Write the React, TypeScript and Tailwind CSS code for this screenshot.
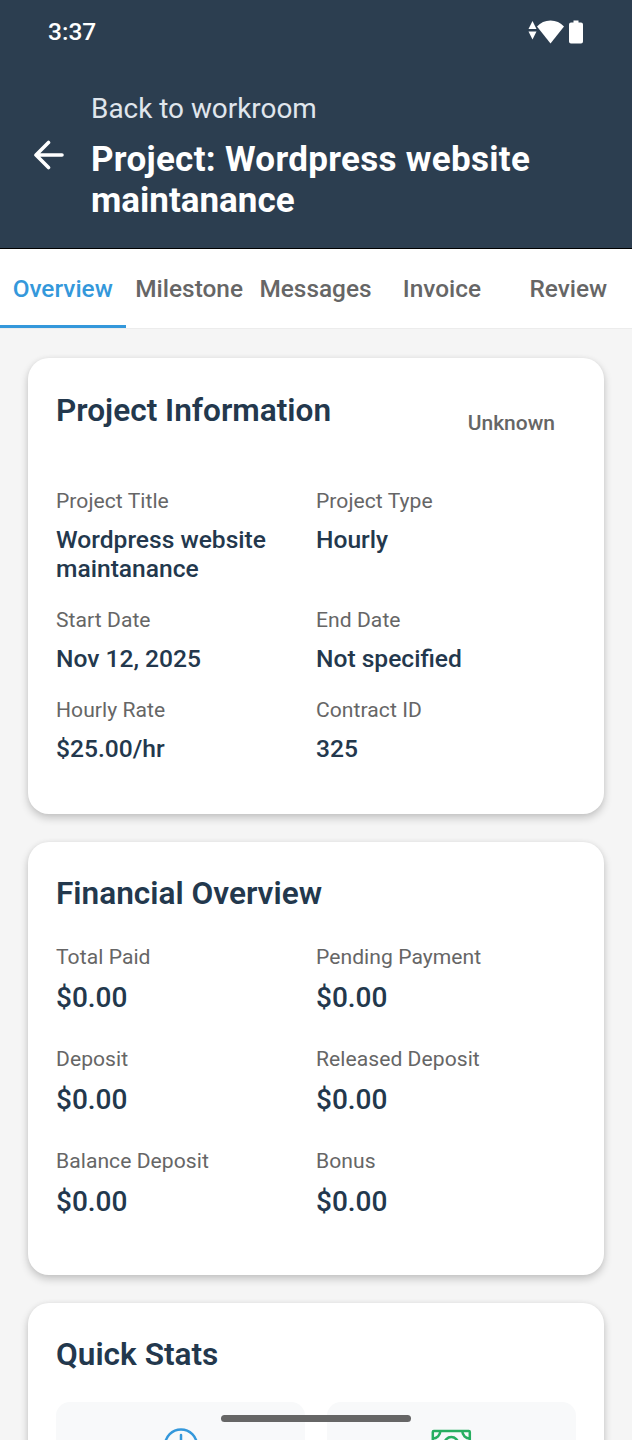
type Item = { label: string; value: string }

const tabs = ['Overview', 'Milestone', 'Messages', 'Invoice', 'Review']

const projectInfo: Item[] = [
  { label: 'Project Title', value: 'Wordpress website maintanance' },
  { label: 'Project Type', value: 'Hourly' },
  { label: 'Start Date', value: 'Nov 12, 2025' },
  { label: 'End Date', value: 'Not specified' },
  { label: 'Hourly Rate', value: '$25.00/hr' },
  { label: 'Contract ID', value: '325' }
]

const financials: Item[] = [
  { label: 'Total Paid', value: '$0.00' },
  { label: 'Pending Payment', value: '$0.00' },
  { label: 'Deposit', value: '$0.00' },
  { label: 'Released Deposit', value: '$0.00' },
  { label: 'Balance Deposit', value: '$0.00' },
  { label: 'Bonus', value: '$0.00' }
]

const cardClass =
  'shrink-0 rounded-[21px] bg-white px-7 pt-7 shadow-[0_4px_8px_rgba(0,0,0,0.2),0_0_5px_rgba(0,0,0,0.05)]'
const titleClass = 'text-[31.6px] leading-[48px] font-semibold text-[#23384d]'

function StatusBar() {
  return (
    <div className="flex h-16 items-center justify-between pl-12 pr-[47px]">
      <span className="text-[24.5px] font-medium leading-7">3:37</span>
      <svg width="57" height="26" viewBox="0 0 57 26" fill="currentColor">
        <path d="M4.5 2 8.500 10H.5zM.5 12.500h8L4.5 20.500z" />
        <path d="M9 7.500C12.500 3.500 17 1.500 22.500 1.500s10 2 13.500 6L22.500 24.500z" />
        <path d="M45.500 1.500h5v2H53q2 0 2 2v17q0 2-2 2h-10q-2 0-2-2v-17q0-2 2-2h2.500z" />
      </svg>
    </div>
  )
}

function Header() {
  return (
    <header className="h-[249px] shrink-0 border-b border-black bg-[#2c3e50] text-white">
      <StatusBar />
      <div className="flex pl-[34px] pt-6">
        <svg
          className="mt-[52px] shrink-0"
          width="30"
          height="30"
          viewBox="0 0 30 30"
          fill="none"
          stroke="currentColor"
          strokeWidth="3.6"
          strokeLinecap="round"
          strokeLinejoin="round"
        >
          <path d="M14.500 2.500 2 15l12.500 12.500M2.500 15H28" />
        </svg>
        <div className="ml-[27px]">
          <p className="pt-px text-[27.9px] leading-10 text-[#e0e6ed]">Back to workroom</p>
          <h1 className="mt-[10px] w-[480px] text-[35px] font-bold leading-[41px]">
            <span className="tracking-[0.3px]">Project: Wordpress website</span> maintanance
          </h1>
        </div>
      </div>
    </header>
  )
}

function TabBar() {
  return (
    <nav className="flex h-20 shrink-0 border-b border-[#ececec] bg-white">
      {tabs.map((tab, i) => (
        <button
          key={tab}
          type="button"
          className={`flex-1 basis-0 whitespace-nowrap border-b-[3px] pr-px pt-1 text-[24.4px] font-medium ${
            i === 0 ? 'border-[#3498db] text-[#3498db]' : 'border-transparent text-[#666]'
          }`}
        >
          {tab}
        </button>
      ))}
    </nav>
  )
}

function QuickStats() {
  return (
    <section className={`${cardClass} h-80`}>
      <h2 className={titleClass}>Quick Stats</h2>
      <div className="mt-[23px] flex justify-between">
        <div className="flex h-[180px] w-[249px] justify-center rounded-[14px] bg-[#f8f9fa] pt-[25px]">
          <svg width="42" height="42" viewBox="0 0 42 42" fill="none" stroke="#3498db" strokeWidth="2.500">
            <circle cx="21" cy="18.500" r="16" />
            <path d="M21 8v14h8" strokeLinecap="round" />
          </svg>
        </div>
        <div className="flex h-[180px] w-[249px] justify-center rounded-[14px] bg-[#f8f9fa] pt-[25px]">
          <svg width="42" height="42" viewBox="0 0 42 42" fill="none" stroke="#27ae60" strokeWidth="2.500">
            <rect x="1.800" y="4" width="37" height="26" rx="1" />
            <circle cx="20.300" cy="17" r="7" />
            <path d="M9.300 4a7.500 7.500 0 0 1-7.500 7.500M31.300 4a7.500 7.500 0 0 0 7.500 7.500M1.800 22.500a7.500 7.500 0 0 1 7.500 7.500M38.800 22.500a7.500 7.500 0 0 0-7.500 7.500" />
          </svg>
        </div>
      </div>
    </section>
  )
}

export default function App() {
  return (
    <div className="relative flex h-[1440px] w-[632px] flex-col overflow-hidden bg-[#f5f5f5] font-[Roboto,sans-serif]">
      <Header />
      <TabBar />

      <main className="flex min-h-0 flex-1 flex-col gap-7 px-7 pt-[29px]">
        <section className={`${cardClass} h-[456px]`}>
          <div className="flex h-[74px] justify-between">
            <h2 className={`${titleClass} pt-px`}>Project Information</h2>
            <span className="mr-[21px] mt-[25px] text-[21px] font-medium leading-6 text-[#666]">Unknown</span>
          </div>
          <div className="mt-7 grid grid-cols-2 gap-y-[25px]">
            {projectInfo.map((item) => (
              <div key={item.label} className="pr-6">
                <p className="text-[21.1px] leading-[25px] tracking-[0.05px] text-[#666]">{item.label}</p>
                <p className="mt-[11px] pt-px text-[24.6px] font-medium leading-[29px] text-[#23384d] -mb-px">
                  {item.value}
                </p>
              </div>
            ))}
          </div>
        </section>

        <section className={`${cardClass} h-[433px]`}>
          <h2 className={titleClass}>Financial Overview</h2>
          <div className="mt-[26px] grid grid-cols-2 gap-y-[31px]">
            {financials.map((item) => (
              <div key={item.label}>
                <p className="text-[21.1px] leading-[25px] tracking-[0.05px] text-[#666]">{item.label}</p>
                <p className="mt-3 text-[28px] font-medium leading-[34px] text-[#23384d]">{item.value}</p>
              </div>
            ))}
          </div>
        </section>

        <QuickStats />
      </main>

      {/* System gesture handle */}
      <div className="absolute bottom-[18px] left-[221px] h-[7px] w-[190px] rounded-full bg-[#666]" />
    </div>
  )
}
